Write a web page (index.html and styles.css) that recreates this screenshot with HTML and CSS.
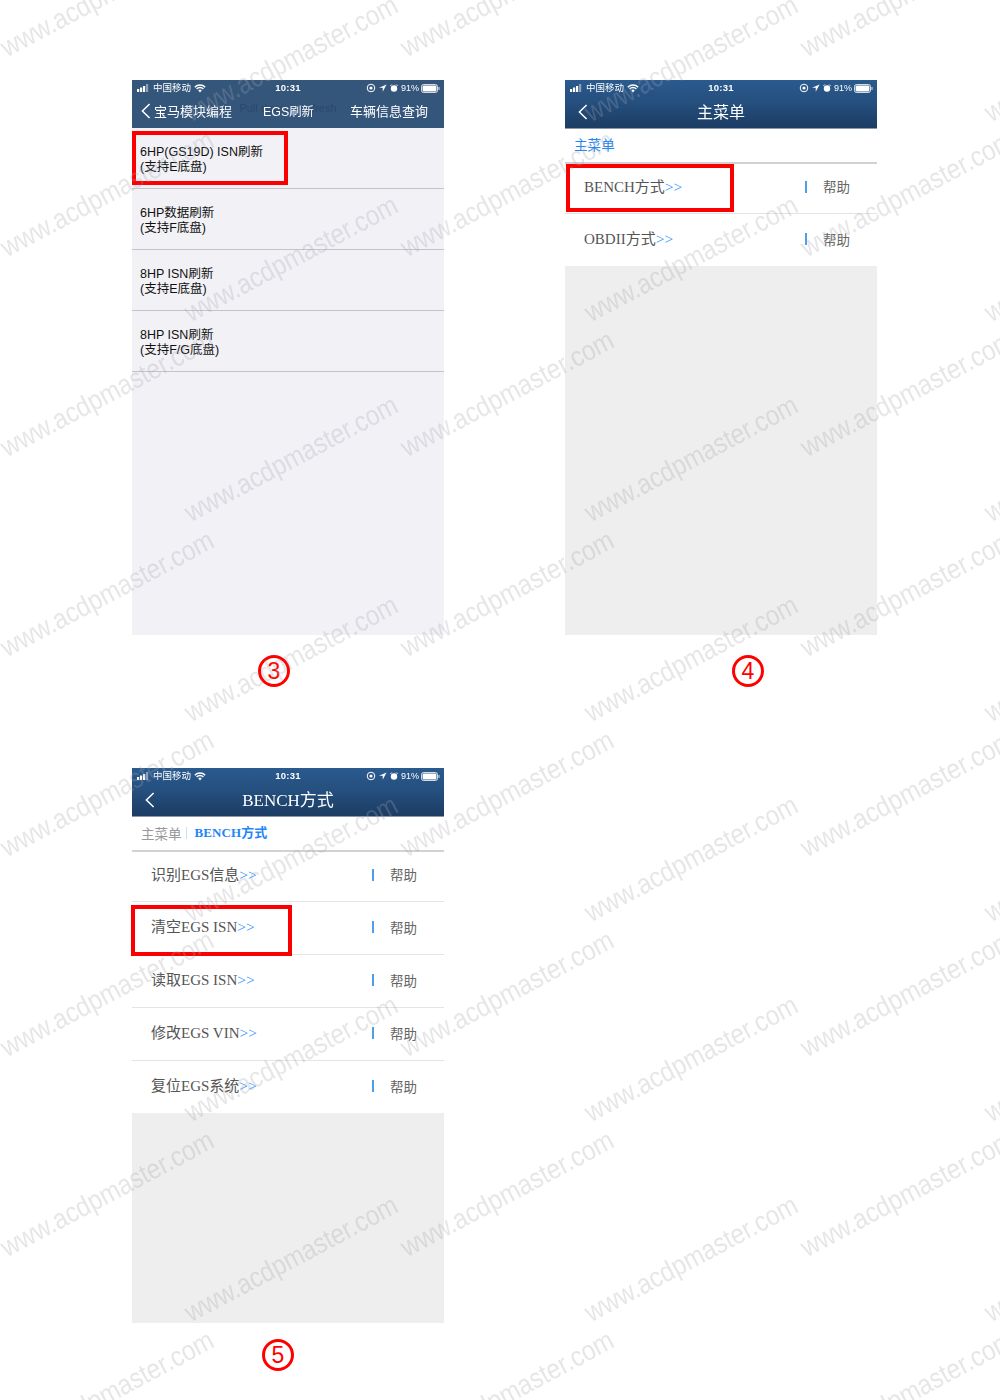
FILE: index.html
```html
<!DOCTYPE html>
<html lang="zh">
<head>
<meta charset="utf-8">
<title>EGS ISN</title>
<link rel="stylesheet" href="styles.css">
</head>
<body>
<svg width="0" height="0" class="defs">
  <defs>
    <symbol id="signal" viewBox="0 0 13 8"><rect x="0" y="5" width="2.2" height="3"/><rect x="3" y="3.5" width="2.2" height="4.5"/><rect x="6" y="2" width="2.2" height="6"/><rect x="9" y="0" width="2.2" height="8" opacity=".45"/></symbol>
    <symbol id="wifi" viewBox="0 0 12 9"><path d="M.8 3.2a7.4 7.4 0 0 1 10.4 0M2.6 5a4.7 4.7 0 0 1 6.8 0" fill="none" stroke="#fff" stroke-width="1.4"/><path d="M4.3 6.4a2.4 2.4 0 0 1 3.4 0L6 8.6z"/></symbol>
    <symbol id="lock" viewBox="0 0 10 10"><circle cx="5" cy="5" r="3.8" fill="none" stroke="#fff" stroke-width="1"/><circle cx="5" cy="5" r="1.6"/></symbol>
    <symbol id="arrow" viewBox="0 0 9 9"><path d="M8.5.5 0 4.3h4.2V8.8z"/></symbol>
    <symbol id="alarm" viewBox="0 0 9 9"><circle cx="4.5" cy="5" r="3.6"/><path d="M.5 2.2 2 .6M8.5 2.2 7 .6" stroke="#fff" stroke-width="1.1"/></symbol>
    <symbol id="battery" viewBox="0 0 19 9"><rect x=".5" y=".5" width="16" height="8" rx="2" fill="none" stroke="#fff" stroke-width=".8"/><rect x="1.6" y="1.6" width="13.8" height="5.8" rx="1"/><rect x="17.4" y="3" width="1.2" height="3" rx=".5" opacity=".7"/></symbol>
    <symbol id="back" viewBox="0 0 10 16"><path d="M8.6 1 1.4 8l7.2 7" fill="none" stroke="#fff" stroke-width="1.5"/></symbol>
  </defs>
</svg>

<main class="sheet">
  <section class="cell">
    <div class="phone phone-list">
      <header class="appbar appbar-flat">
        <div class="status">
          <span class="carrier"><svg class="i-signal"><use href="#signal"/></svg>中国移动<svg class="i-wifi"><use href="#wifi"/></svg></span>
          <span class="clock">10:31</span>
          <span class="sys"><svg class="i-lock"><use href="#lock"/></svg><svg class="i-arrow"><use href="#arrow"/></svg><svg class="i-alarm"><use href="#alarm"/></svg>91%<svg class="i-battery"><use href="#battery"/></svg></span>
        </div>
        <div class="nav nav-tabs">
          <span class="nav-back"><svg class="i-back"><use href="#back"/></svg>宝马模块编程</span>
          <span class="nav-mid">EGS刷新</span>
          <span class="nav-right">车辆信息查询</span>
          <span class="pull">Pull down to refresh</span>
        </div>
      </header>
      <ul class="plain-list">
        <li>6HP(GS19D) ISN刷新<br>(支持E底盘)</li>
        <li>6HP数据刷新<br>(支持F底盘)</li>
        <li>8HP ISN刷新<br>(支持E底盘)</li>
        <li>8HP ISN刷新<br>(支持F/G底盘)</li>
      </ul>
      <div class="hl hl-a"></div>
    </div>
    <div class="caption caption-3"><span class="circle">3</span></div>
  </section>

  <section class="cell">
    <div class="phone phone-menu">
      <header class="appbar appbar-grad">
        <div class="status">
          <span class="carrier"><svg class="i-signal"><use href="#signal"/></svg>中国移动<svg class="i-wifi"><use href="#wifi"/></svg></span>
          <span class="clock">10:31</span>
          <span class="sys"><svg class="i-lock"><use href="#lock"/></svg><svg class="i-arrow"><use href="#arrow"/></svg><svg class="i-alarm"><use href="#alarm"/></svg>91%<svg class="i-battery"><use href="#battery"/></svg></span>
        </div>
        <div class="nav nav-title"><svg class="i-back title-back"><use href="#back"/></svg><span class="title title-sans">主菜单</span></div>
      </header>
      <div class="crumbs crumbs-tall"><span class="crumb-now crumb-sans">主菜单</span></div>
      <ul class="menu">
        <li><span class="m-label">BENCH方式<b>&gt;&gt;</b></span><i class="m-sep"></i><span class="m-help">帮助</span></li>
        <li><span class="m-label">OBDII方式<b>&gt;&gt;</b></span><i class="m-sep"></i><span class="m-help">帮助</span></li>
      </ul>
      <div class="filler"></div>
      <div class="hl hl-b"></div>
    </div>
    <div class="caption caption-4"><span class="circle">4</span></div>
  </section>

  <section class="cell">
    <div class="phone phone-menu">
      <header class="appbar appbar-grad">
        <div class="status">
          <span class="carrier"><svg class="i-signal"><use href="#signal"/></svg>中国移动<svg class="i-wifi"><use href="#wifi"/></svg></span>
          <span class="clock">10:31</span>
          <span class="sys"><svg class="i-lock"><use href="#lock"/></svg><svg class="i-arrow"><use href="#arrow"/></svg><svg class="i-alarm"><use href="#alarm"/></svg>91%<svg class="i-battery"><use href="#battery"/></svg></span>
        </div>
        <div class="nav nav-title"><svg class="i-back title-back"><use href="#back"/></svg><span class="title">BENCH方式</span></div>
      </header>
      <div class="crumbs"><span class="crumb-old">主菜单</span><i class="crumb-sep"></i><span class="crumb-now">BENCH方式</span></div>
      <ul class="menu">
        <li><span class="m-label">识别EGS信息<b>&gt;&gt;</b></span><i class="m-sep"></i><span class="m-help">帮助</span></li>
        <li><span class="m-label">清空EGS ISN<b>&gt;&gt;</b></span><i class="m-sep"></i><span class="m-help">帮助</span></li>
        <li><span class="m-label">读取EGS ISN<b>&gt;&gt;</b></span><i class="m-sep"></i><span class="m-help">帮助</span></li>
        <li><span class="m-label">修改EGS VIN<b>&gt;&gt;</b></span><i class="m-sep"></i><span class="m-help">帮助</span></li>
        <li><span class="m-label">复位EGS系统<b>&gt;&gt;</b></span><i class="m-sep"></i><span class="m-help">帮助</span></li>
      </ul>
      <div class="filler"></div>
      <div class="hl hl-c"></div>
    </div>
    <div class="caption caption-5"><span class="circle">5</span></div>
  </section>
</main>

<svg class="watermark" width="1000" height="1400" viewBox="0 0 1000 1400" aria-hidden="true">
  <g class="wm">
    <text x="7" y="58">www.acdpmaster.com</text>
    <text x="7" y="258">www.acdpmaster.com</text>
    <text x="7" y="458">www.acdpmaster.com</text>
    <text x="7" y="658">www.acdpmaster.com</text>
    <text x="7" y="858">www.acdpmaster.com</text>
    <text x="7" y="1058">www.acdpmaster.com</text>
    <text x="7" y="1258">www.acdpmaster.com</text>
    <text x="7" y="1458">www.acdpmaster.com</text>
    <text x="407" y="58">www.acdpmaster.com</text>
    <text x="407" y="258">www.acdpmaster.com</text>
    <text x="407" y="458">www.acdpmaster.com</text>
    <text x="407" y="658">www.acdpmaster.com</text>
    <text x="407" y="858">www.acdpmaster.com</text>
    <text x="407" y="1058">www.acdpmaster.com</text>
    <text x="407" y="1258">www.acdpmaster.com</text>
    <text x="407" y="1458">www.acdpmaster.com</text>
    <text x="807" y="58">www.acdpmaster.com</text>
    <text x="807" y="258">www.acdpmaster.com</text>
    <text x="807" y="458">www.acdpmaster.com</text>
    <text x="807" y="658">www.acdpmaster.com</text>
    <text x="807" y="858">www.acdpmaster.com</text>
    <text x="807" y="1058">www.acdpmaster.com</text>
    <text x="807" y="1258">www.acdpmaster.com</text>
    <text x="807" y="1458">www.acdpmaster.com</text>
    <text x="191" y="123">www.acdpmaster.com</text>
    <text x="191" y="323">www.acdpmaster.com</text>
    <text x="191" y="523">www.acdpmaster.com</text>
    <text x="191" y="723">www.acdpmaster.com</text>
    <text x="191" y="923">www.acdpmaster.com</text>
    <text x="191" y="1123">www.acdpmaster.com</text>
    <text x="191" y="1323">www.acdpmaster.com</text>
    <text x="591" y="123">www.acdpmaster.com</text>
    <text x="591" y="323">www.acdpmaster.com</text>
    <text x="591" y="523">www.acdpmaster.com</text>
    <text x="591" y="723">www.acdpmaster.com</text>
    <text x="591" y="923">www.acdpmaster.com</text>
    <text x="591" y="1123">www.acdpmaster.com</text>
    <text x="591" y="1323">www.acdpmaster.com</text>
    <text x="991" y="123">www.acdpmaster.com</text>
    <text x="991" y="323">www.acdpmaster.com</text>
    <text x="991" y="523">www.acdpmaster.com</text>
    <text x="991" y="723">www.acdpmaster.com</text>
    <text x="991" y="923">www.acdpmaster.com</text>
    <text x="991" y="1123">www.acdpmaster.com</text>
    <text x="991" y="1323">www.acdpmaster.com</text>
  </g>
</svg>
</body>
</html>
```

FILE: styles.css
```css
* { box-sizing: border-box; }
html, body { margin: 0; padding: 0; }
body {
  width: 1000px;
  height: 1400px;
  background: #fff;
  position: relative;
  overflow: hidden;
  font-family: "Liberation Sans", "Noto Sans CJK SC", sans-serif;
}
.defs { position: absolute; }

.sheet {
  display: grid;
  grid-template-columns: 312px 312px;
  column-gap: 121px;
  grid-auto-rows: 688px;
  padding: 80px 0 0 132px;
}
.cell { display: flex; flex-direction: column; }

.phone {
  position: relative;
  width: 312px;
  height: 555px;
  display: flex;
  flex-direction: column;
}
.phone-list { background: #f1f1f6; }
.phone-menu { background: #fff; }

/* App bar */
.appbar { color: #fff; height: 49px; flex: none; filter: blur(.3px); }
.appbar-flat { background: #34567b; height: 48px; }
.appbar-grad { background: linear-gradient(#2a5a8e 0%, #25507f 45%, #1c3c63 100%); border-bottom: 1px solid #8b97a5; }

.status {
  position: relative;
  height: 16px;
  margin-bottom: 1px;
  display: flex;
  align-items: center;
  justify-content: space-between;
  padding: 0 4px 0 5px;
  font-size: 9.5px;
  line-height: 16px;
}
.status svg { fill: #fff; display: block; flex: none; }
.carrier, .sys { display: flex; align-items: center; }
.sys { font-size: 9px; }
.clock {
  position: absolute;
  left: 0;
  right: 0;
  text-align: center;
  font-size: 9.5px;
  font-weight: 700;
  letter-spacing: .2px;
}
.i-signal { width: 13px; height: 8px; margin-right: 3px; }
.i-wifi { width: 12px; height: 9px; margin-left: 3px; }
.i-lock { width: 10px; height: 10px; margin-right: 3px; }
.i-arrow { width: 8px; height: 8px; margin-right: 3px; }
.i-alarm { width: 8px; height: 8px; margin-right: 3px; }
.i-battery { width: 19px; height: 9px; margin-left: 2px; }

.nav { position: relative; height: 31px; display: flex; align-items: center; }
.i-back { width: 10px; height: 16px; display: block; flex: none; }

.nav-tabs { justify-content: space-between; padding: 0 16px 4px 9px; font-size: 13px; }
.nav-back { display: flex; align-items: center; gap: 3px; position: relative; z-index: 1; }
.nav-mid { position: relative; z-index: 1; font-size: 12.4px; margin-right: 5px; }
.nav-right { position: relative; z-index: 1; }
.pull {
  position: absolute;
  left: 0;
  right: 0;
  top: 4px;
  text-align: center;
  font-size: 11px;
  line-height: 14px;
  color: #2b496b;
}

.nav-title { justify-content: center; }
.title-back { position: absolute; left: 13px; top: 7px; }
.title { font: 17px/24px "Liberation Serif", "Noto Sans CJK SC", serif; }
.title-sans { font-family: "Noto Sans CJK SC", sans-serif; font-size: 16px; margin-bottom: 3px; }

/* List of screen 3 */
.plain-list { list-style: none; margin: 0; padding: 0; }
.plain-list li {
  height: 61px;
  padding: 17px 0 0 8px;
  font-size: 12.5px;
  line-height: 15px;
  color: #111;
  border-bottom: 1px solid #c4c4c8;
}

/* Breadcrumbs */
.crumbs {
  height: 35px;
  flex: none;
  display: flex;
  align-items: center;
  padding: 0 0 2px 9px;
  background: #fff;
  border-bottom: 2px solid #d2d2d2;
  font: 13px/16px "Liberation Serif", "Noto Sans CJK SC", serif;
}
.crumbs-tall { height: 35px; padding-bottom: 3px; }
.crumb-old { color: #999; font-family: "Noto Sans CJK SC", sans-serif; font-size: 13.5px; }
.crumb-sep { width: 1px; height: 12px; background: #cfdfee; margin: 0 8px 0 4px; }
.crumb-now { color: #1f86f5; font-weight: 700; letter-spacing: .1px; }
.crumb-sans { font-family: "Noto Sans CJK SC", sans-serif; font-weight: 400; font-size: 13.5px; }

/* Menu rows */
.menu { list-style: none; margin: 0; padding: 0; flex: none; background: #fff; }
.menu li {
  height: 53px;
  display: flex;
  align-items: center;
  padding: 0 27px 2px 19px;
  border-bottom: 1px solid #e4e4e4;
}
.menu li:first-child { height: 50px; padding-bottom: 4px; }
.menu li:last-child { height: 52px; border-bottom: 0; }
.m-label { flex: 1; font: 15px/20px "Liberation Serif", "Noto Sans CJK SC", serif; color: #555; }
.m-label b { font-weight: 400; color: #2f8fff; font-size: 15.5px; }
.m-sep { width: 2px; height: 12px; background: #4f9eea; margin-right: 16px; }
.m-help { font-size: 13.5px; line-height: 16px; color: #666; font-family: "Noto Sans CJK SC", sans-serif; margin-bottom: 1px; }

.filler { flex: 1; background: #eee; }

/* Red highlight boxes */
.hl { position: absolute; border: 4px solid #fb0000; }
.hl-a { left: 0; top: 51px; width: 156px; height: 54px; }
.hl-b { left: 1px; top: 84px; width: 168px; height: 48px; }
.hl-c { left: -1px; top: 137px; width: 161px; height: 51px; }

/* Circled numbers */
.caption { flex: 1; display: flex; padding-top: 20px; }
.caption-3 { padding-left: 126px; }
.caption-4 { padding-left: 167px; }
.caption-5 { padding-left: 130px; padding-top: 16px; }
.circle {
  width: 32px;
  height: 32px;
  border: 3px solid #f00;
  border-radius: 50%;
  color: #f00;
  font-size: 23px;
  line-height: 26px;
  text-align: center;
}

/* Watermark */
.watermark { position: absolute; left: 0; top: 0; pointer-events: none; filter: blur(.5px); }
.wm text {
  font-family: "Liberation Sans", sans-serif;
  font-size: 28px;
  fill: rgba(165, 165, 175, .28);
  transform-box: fill-box;
  transform-origin: 0 79%;
  transform: rotate(-28deg) scaleX(.87);
}
```
